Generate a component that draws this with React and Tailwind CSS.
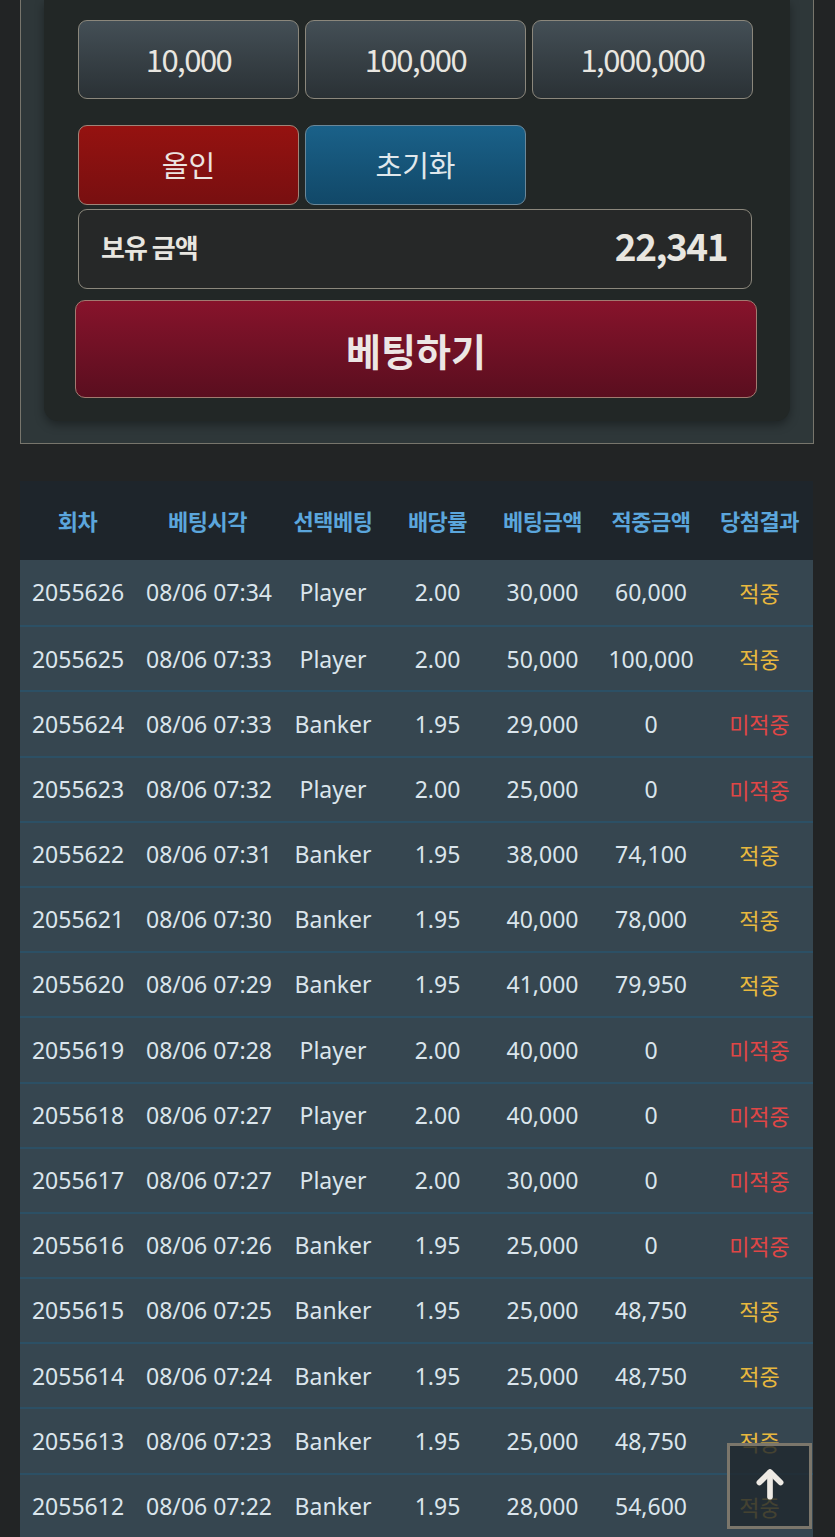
import React from "react";

const rows = [
  ["2055626", "08/06 07:34", "Player", "2.00", "30,000", "60,000", true],
  ["2055625", "08/06 07:33", "Player", "2.00", "50,000", "100,000", true],
  ["2055624", "08/06 07:33", "Banker", "1.95", "29,000", "0", false],
  ["2055623", "08/06 07:32", "Player", "2.00", "25,000", "0", false],
  ["2055622", "08/06 07:31", "Banker", "1.95", "38,000", "74,100", true],
  ["2055621", "08/06 07:30", "Banker", "1.95", "40,000", "78,000", true],
  ["2055620", "08/06 07:29", "Banker", "1.95", "41,000", "79,950", true],
  ["2055619", "08/06 07:28", "Player", "2.00", "40,000", "0", false],
  ["2055618", "08/06 07:27", "Player", "2.00", "40,000", "0", false],
  ["2055617", "08/06 07:27", "Player", "2.00", "30,000", "0", false],
  ["2055616", "08/06 07:26", "Banker", "1.95", "25,000", "0", false],
  ["2055615", "08/06 07:25", "Banker", "1.95", "25,000", "48,750", true],
  ["2055614", "08/06 07:24", "Banker", "1.95", "25,000", "48,750", true],
  ["2055613", "08/06 07:23", "Banker", "1.95", "25,000", "48,750", true],
  ["2055612", "08/06 07:22", "Banker", "1.95", "28,000", "54,600", true],
];

const cols = "grid grid-cols-[115px_145px_106px_103px_107px_110px_107px]";

export default function App() {
  return (
    <div
      className="relative w-[835px] h-[1537px] overflow-hidden bg-[#222425]"
      style={{ fontFamily: '"Noto Sans", "Noto Sans CJK KR", sans-serif' }}
    >
      {/* top panel */}
      <div className="mx-[20px] w-[794px] h-[444px] border-x border-b border-[#77756c] bg-[#2e3739] px-[23px]">
        <div className="h-[421px] rounded-b-[14px] bg-[#222726] shadow-[0_4px_10px_rgba(0,0,0,0.35)] px-[34px] pt-[20px]">
          <div className="flex gap-[6px]">
            {["10,000", "100,000", "1,000,000"].map((t) => (
              <div
                key={t}
                className="w-[221px] h-[79px] rounded-[9px] border border-[#8b877c] bg-gradient-to-b from-[#444f56] to-[#2a3135] flex items-center justify-center text-[31px] text-[#e8e6e0] tracking-[-1.5px]"
                style={{ fontFamily: '"Noto Sans CJK KR", sans-serif' }}
              >
                {t}
              </div>
            ))}
          </div>
          <div className="flex gap-[6px] mt-[26px]">
            <div
              className="w-[221px] h-[80px] rounded-[9px] border border-[#a08478] bg-gradient-to-b from-[#951210] to-[#780f10] flex items-center justify-center text-[29px] text-[#ece4e0]"
              style={{ fontFamily: '"Noto Sans CJK KR", sans-serif' }}
            >
              올인
            </div>
            <div
              className="w-[221px] h-[80px] rounded-[9px] border border-[#6b8798] bg-gradient-to-b from-[#1a6189] to-[#114868] flex items-center justify-center text-[29px] text-[#e0e8ec]"
              style={{ fontFamily: '"Noto Sans CJK KR", sans-serif' }}
            >
              초기화
            </div>
          </div>
          <div className="mt-[4px] w-[674px] h-[80px] rounded-[9px] border border-[#8b877c] bg-[#262828] flex items-center justify-between pl-[22px] pr-[24px] pb-[6px]">
            <span
              className="text-[26px] font-bold text-[#e8e6e0] tracking-[-1px]"
              style={{ fontFamily: '"Noto Sans CJK KR", sans-serif' }}
            >
              보유 금액
            </span>
            <span
              className="text-[37px] font-bold text-[#e8e6e0] tracking-[-1.5px]"
              style={{ fontFamily: '"Noto Sans CJK KR", sans-serif' }}
            >
              22,341
            </span>
          </div>
          <div
            className="-ml-[3px] mt-[11px] w-[682px] h-[98px] rounded-[10px] border border-[#a27a70] bg-gradient-to-b from-[#87132b] to-[#5a0e1f] flex items-center justify-center text-[38px] font-bold text-[#ece6e4]"
            style={{ fontFamily: '"Noto Sans CJK KR", sans-serif' }}
          >
            베팅하기
          </div>
        </div>
      </div>

      {/* table */}
      <div className="mx-[20px] mt-[37px] w-[793px]">
        <div
          className={`${cols} h-[79px] items-center bg-[#1e252b] text-[22px] font-bold text-[#5ba6dc] text-center tracking-[-0.5px]`}
          style={{ fontFamily: '"Noto Sans CJK KR", sans-serif' }}
        >
          <div>회차</div>
          <div>베팅시각</div>
          <div>선택베팅</div>
          <div>배당률</div>
          <div>베팅금액</div>
          <div>적중금액</div>
          <div>당첨결과</div>
        </div>
        {rows.map((r, i) => (
          <div
            key={r[0]}
            className={`${cols} h-[65.2px] items-center bg-[#364650] text-[23px] text-[#dbe5ec] text-center ${
              i === 0 ? "" : "border-t-2 border-[#2c5065]"
            }`}
          >
            <div className="pl-[1px]">{r[0]}</div>
            <div className="pl-[3px]">{r[1]}</div>
            <div>{r[2]}</div>
            <div>{r[3]}</div>
            <div>{r[4]}</div>
            <div>{r[5]}</div>
            <div
              className={`text-[22px] ${r[6] ? "text-[#e8b83e]" : "text-[#e04646]"}`}
              style={{ fontFamily: '"Noto Sans CJK KR", sans-serif' }}
            >
              {r[6] ? "적중" : "미적중"}
            </div>
          </div>
        ))}
      </div>

      {/* scroll to top */}
      <div className="absolute left-[727px] top-[1443px] w-[85px] h-[86px] border-[3px] border-[#7b766b] bg-[rgba(32,40,46,0.82)] flex items-center justify-center">
        <svg width="34" height="34" viewBox="0 0 24 24" fill="none" stroke="#eeeae4" strokeWidth="4" strokeLinecap="round" strokeLinejoin="round" className="mb-[4px]">
          <path d="M12 21V4" />
          <path d="M4.5 11L12 3.5L19.5 11" />
        </svg>
      </div>
    </div>
  );
}
